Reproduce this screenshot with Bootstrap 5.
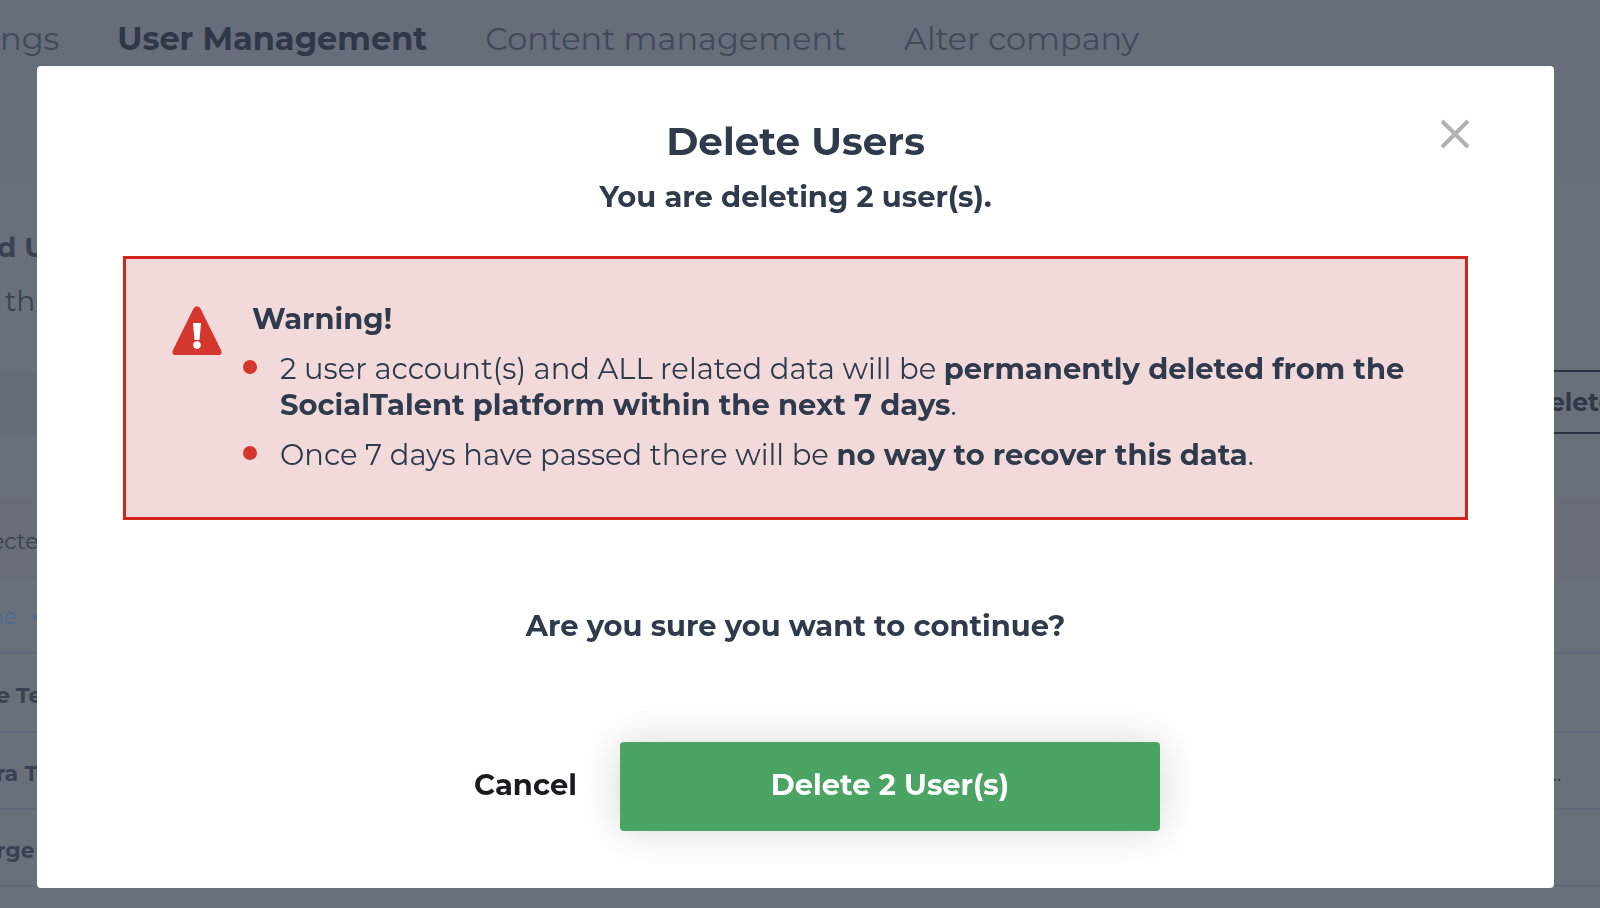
<!DOCTYPE html>
<html lang="en">
<head>
<meta charset="utf-8">
<meta name="viewport" content="width=device-width, initial-scale=1">
<title>User Management – Delete Users</title>
<link href="https://cdn.jsdelivr.net/npm/bootstrap@5.3.0/dist/css/bootstrap.min.css" rel="stylesheet">
<style>
  :root { --ink: #2f3b4d; --danger-red: #d3372d; }
  body { font-family: Montserrat, Inter, sans-serif; color: #394152; background: #6a707b; overflow: hidden; }

  /* dimmed page */
  .page-head { background: #676d7b; height: 177px; }
  .page-tabs { gap: 58px; padding-top: 15px; }
  .page-tabs a { font-size: 32px; line-height: 48px; font-weight: 400; color: #424958; text-decoration: none; white-space: nowrap; }
  .page-tabs a.active { font-weight: 700; color: #303747; }
  .intro { height: 193px; padding-top: 50px; font-size: 28px; line-height: 40px; text-indent: -3px; }
  .intro p { margin: 14px 0 0 8px; }
  .toolbar { height: 64px; background: linear-gradient(90deg, #666c7a 50%, #6a707b 50%); }
  .toolbar button { width: 120px; background: none; border: 2px solid #2b3140; border-width: 2px 0; color: #303747; font-size: 25px; font-weight: 700; padding: 2px 0 0 69px; text-align: left; }
  .selection { margin-top: 64px; height: 80px; background: #686d78; font-size: 22px; padding-top: 27px; text-indent: -9px; }
  .people { width: 100%; font-size: 22px; line-height: 32px; }
  .people th, .people td { height: 77px; padding: 6px 0 0; border-bottom: 2px solid #616878; overflow: hidden; white-space: nowrap; text-indent: -4px; }
  .people thead th { height: 75px; font-weight: 400; padding: 4px 0 0; text-indent: -11px; }
  .people thead svg { margin-left: 2px; }
  .people tbody tr:first-child td { height: 79px; }
  .people thead a { color: #4b6a99; text-decoration: none; }
  .people .edge { width: 16px; border-left: 1px solid #6a707b; }
  .people .more { text-align: right; padding-right: 22px; }

  /* dialog */
  .confirm { margin: 66px 46px 20px 37px; max-width: none; }
  .confirm .modal-content { color: var(--ink); border: 0; border-radius: 4px; padding: 51px 86px 57px; font-size: 29px; line-height: 36px; }
  .confirm h1 { font-size: 39px; line-height: 48px; font-weight: 700; margin: 0 0 14px; }
  .confirm .ask { font-weight: 700; margin: 0; }
  .close-x { position: absolute; top: 45px; right: 76px; padding: 8px; border: 0; background: none; line-height: 0; }
  .warn { margin: 41px 0 88px; height: 264px; background: #f2dada; border: 3px solid #d3261a; padding: 42px 46px; gap: 30px; }
  .warn svg { margin-top: 5px; flex: none; }
  .warn h2 { font-size: 29px; line-height: 36px; font-weight: 700; margin: 0 0 14px; }
  .warn li { list-style: none; position: relative; padding-left: 28px; margin-bottom: 14px; }
  .warn li::before { content: ""; position: absolute; left: -9px; top: 9px; width: 14px; height: 14px; border-radius: 50%; background: var(--danger-red); }
  .warn b { font-weight: 700; }
  .actions { margin-top: 98px; }
  .actions .btn { font-size: 29px; line-height: 40px; font-weight: 700; border: 0; padding: 0 43px 3px; }
  .btn-cancel { color: #1b1b1f; }
  .btn-go { width: 540px; height: 89px; border-radius: 4px; background: #4ba364; color: #fff; box-shadow: 0 0 40px rgba(0, 0, 0, .16); }
  .btn-go:hover { background: #3f9257; color: #fff; }
</style>
</head>
<body>
<div aria-hidden="true">
  <header class="page-head">
    <nav class="page-tabs d-flex">
      <a href="#">ngs</a>
      <a href="#" class="active">User Management</a>
      <a href="#">Content management</a>
      <a href="#">Alter company</a>
    </nav>
  </header>
  <section class="intro">
    <div class="fw-bold">d U</div>
    <p>th</p>
  </section>
  <div class="toolbar d-flex justify-content-end"><button type="button">elete</button></div>
  <div class="selection">ecte</div>
  <table class="people">
    <thead>
      <tr><th><a href="#">ne &nbsp;<svg width="12" height="8" viewBox="0 0 12 8"><path d="M0 1h12L6 7z" fill="#4b6a99"/></svg></a></th><th></th><th class="edge"></th></tr>
    </thead>
    <tbody>
      <tr><td class="fw-bold">e Te</td><td></td><td class="edge"></td></tr>
      <tr><td class="fw-bold">ra T</td><td class="more">...</td><td class="edge"></td></tr>
      <tr><td class="fw-bold">rge</td><td></td><td class="edge"></td></tr>
    </tbody>
  </table>
</div>

<div class="modal d-block" role="dialog" aria-modal="true" aria-labelledby="dlg-title">
  <div class="modal-dialog confirm">
    <div class="modal-content">
      <button type="button" class="close-x" aria-label="Close">
        <svg width="30" height="30" viewBox="0 0 30 30" fill="none" stroke="#b1b1b1" stroke-width="4"><path d="M2 2l26 26M28 2L2 28"/></svg>
      </button>
      <div class="text-center">
        <h1 id="dlg-title">Delete Users</h1>
        <p class="ask">You are deleting 2 user(s).</p>
      </div>
      <div class="warn d-flex align-items-start">
        <svg width="50" height="50" viewBox="0 0 50 50"><path d="M21.5 2.5Q25-2 28.500 2.500L49 44Q51 49 46 49H4Q-1 49 1 44Z" fill="#d3372d"/><path d="M21 17h8l-1.500 17h-5z" fill="#fff"/><circle cx="25" cy="39" r="3.800" fill="#fff"/></svg>
        <div>
          <h2>Warning!</h2>
          <ul class="p-0 m-0">
            <li>2 user account(s) and ALL related data will be <b>permanently deleted from the SocialTalent platform within the next 7 days</b>.</li>
            <li>Once 7 days have passed there will be <b>no way to recover this data</b>.</li>
          </ul>
        </div>
      </div>
      <p class="ask text-center">Are you sure you want to continue?</p>
      <div class="actions d-flex justify-content-center align-items-center">
        <button type="button" class="btn btn-cancel">Cancel</button>
        <button type="button" class="btn btn-go">Delete 2 User(s)</button>
      </div>
    </div>
  </div>
</div>
<script src="https://cdn.jsdelivr.net/npm/bootstrap@5.3.0/dist/js/bootstrap.bundle.min.js"></script>
</body>
</html>
